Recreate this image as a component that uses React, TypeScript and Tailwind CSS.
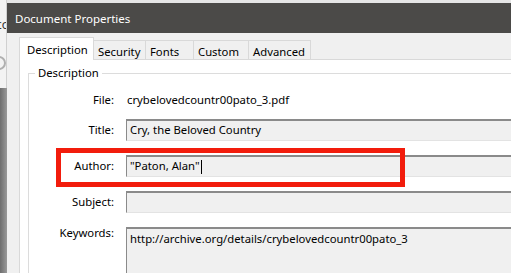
import React from "react";

const font = { fontFamily: '"Noto Sans", "Open Sans", sans-serif' };

function Tab({ label, w, selected, first }: { label: string; w: number; selected?: boolean; first?: boolean }) {
  if (selected) {
    return (
      <div
        className="relative z-10 h-[23px] shrink-0 bg-white border border-b-0 border-[#d9d9d9] pl-[7px] pt-[4px] text-[11.3px] leading-[15px] text-black"
        style={{ width: w }}
      >
        {label}
      </div>
    );
  }
  return (
    <div
      className={`h-[20px] shrink-0 bg-[#f0f0f0] border-t border-r border-[#d9d9d9] ${first ? "border-l" : ""} pl-[4px] pt-[3px] text-[11.3px] leading-[15px] text-black`}
      style={{ width: w }}
    >
      {label}
    </div>
  );
}

function Field({ children, tall }: { children?: React.ReactNode; tall?: boolean }) {
  return (
    <div
      className={`flex-1 ${tall ? "h-[60px] items-start pt-[2px]" : "h-[22px] items-center"} flex bg-[#f0f0f0] border-t-2 border-l border-t-[#8a8a8a] border-l-[#8a8a8a] border-b border-b-[#e3e3e3] pl-[3px] text-[11.3px] text-black whitespace-nowrap overflow-hidden`}
    >
      {children}
    </div>
  );
}

export default function App() {
  return (
    <div className="relative w-[511px] h-[273px] overflow-hidden bg-[#ececec] flex" style={font}>
      {/* background window sliver */}
      <div className="w-[7px] h-full flex flex-col overflow-hidden shrink-0">
        <div className="h-[88px] shrink-0 bg-[#f3f3f3] relative overflow-hidden border-r border-[#d0d0d0]">
          <div className="ml-[-4px] mt-[18px] text-[12px] text-[#333] leading-[14px]">co</div>
          <div className="ml-[-8px] mt-[24px] w-[14px] h-[14px] rounded-full border-2 border-[#b0b0b0]" />
        </div>
        <div className="flex-1 bg-gradient-to-r from-[#6e6e6e] to-[#9a9a9a]" />
      </div>

      {/* dialog */}
      <div className="flex-1 flex flex-col min-h-0">
        <div className="h-[3px] shrink-0 bg-[#e6e6e6]" />
        <div className="h-[30px] shrink-0 bg-[#4b4a48] text-white text-[11.5px] pl-[8px] pt-[1px] flex items-center">Document Properties</div>
        <div className="flex-1 min-h-0 bg-[#f0f0f0] pl-[12px] flex flex-col">
          <div className="flex items-end pt-[4px] h-[27px] shrink-0 -mb-px">
            <Tab label="Description" w={75} selected />
            <Tab label="Security" w={52} />
            <Tab label="Fonts" w={48} />
            <Tab label="Custom" w={55} />
            <Tab label="Advanced" w={62} />
          </div>
          <div className="flex-1 min-h-0 overflow-hidden bg-white border-t border-l border-[#d9d9d9] pl-[8px] pt-[13px]">
            <div className="relative border-t border-l border-[#dcdcdc] h-[400px]">
              <div className="absolute left-[6px] top-[-9px] bg-white px-[3px] text-[11.3px] leading-[16px] text-black">Description</div>
              <div className="flex flex-col text-[11.3px] text-black">
                <div className="flex h-[22px] items-center mt-[15px]">
                  <div className="w-[85px] text-right">File:</div>
                  <div className="pl-[13px]">crybelovedcountr00pato_3.pdf</div>
                </div>
                <div className="flex h-[22px] items-center mt-[8px]">
                  <div className="w-[85px] text-right">Title:</div>
                  <div className="w-[12px]" />
                  <Field>Cry, the Beloved Country</Field>
                </div>
                <div className="flex h-[22px] items-center mt-[14px]">
                  <div className="w-[85px] text-right">Author:</div>
                  <div className="w-[12px]" />
                  <Field>
                    "Paton, Alan"
                    <span className="inline-block w-px h-[14px] bg-black ml-[1px]" />
                  </Field>
                </div>
                <div className="flex h-[22px] items-center mt-[14px]">
                  <div className="w-[85px] text-right">Subject:</div>
                  <div className="w-[12px]" />
                  <Field />
                </div>
                <div className="flex items-start mt-[14px]">
                  <div className="w-[85px] text-right -mt-[2px]">Keywords:</div>
                  <div className="w-[12px]" />
                  <Field tall>http://archive.org/details/crybelovedcountr00pato_3</Field>
                </div>
              </div>
            </div>
          </div>
        </div>
      </div>

      {/* red annotation box */}
      <div className="absolute left-[56px] top-[148px] w-[349px] h-[39px] border-[5px] border-[#f21c0c]" />
    </div>
  );
}
